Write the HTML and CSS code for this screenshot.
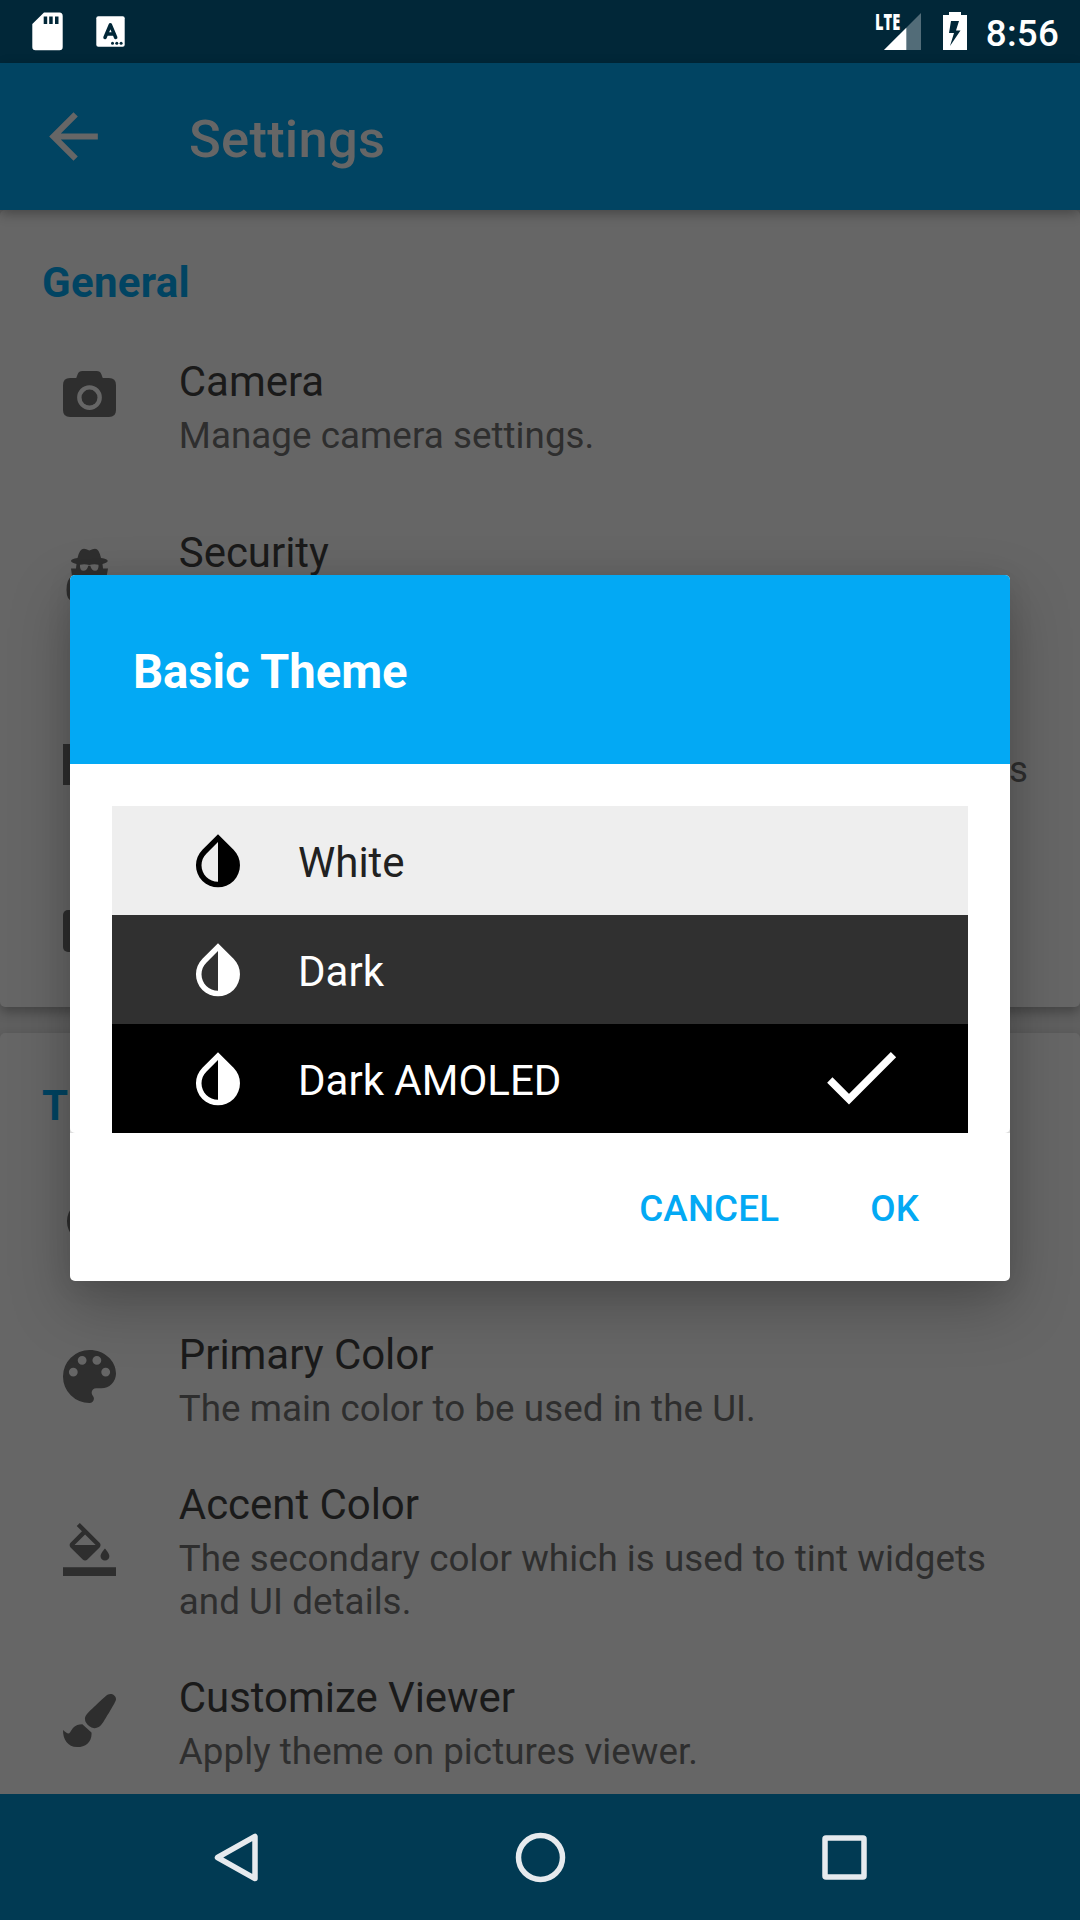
FILE: index.html
```html
<!DOCTYPE html>
<html lang="en">
<head>
<meta charset="utf-8">
<title>Settings</title>
<link rel="stylesheet" href="styles.css">
</head>
<body>
<svg class="defs" width="0" height="0">
  <symbol id="drop" viewBox="0 0 24 24"><path d="M17.66 7.93 12 2.27 6.34 7.93c-3.12 3.12-3.12 8.19 0 11.31C7.9 20.8 9.95 21.58 12 21.58c2.05 0 4.1-.78 5.66-2.34 3.12-3.12 3.12-8.19 0-11.31zM12 19.59c-1.6 0-3.11-.62-4.24-1.76C6.62 16.69 6 15.19 6 13.59s.62-3.11 1.76-4.24L12 5.1v14.49z"/></symbol>
</svg>
<header class="status">
  <div class="status-left">
    <svg class="sd" width="31" height="39" viewBox="0 0 31 39"><path fill="#fff" fill-rule="evenodd" d="M12 .5H27.500Q30.700.5 30.700 4V35Q30.700 38.300 27.500 38.300H3.500Q.3 38.300.3 35V12ZM11.700 4.500V12H15.200V4.500ZM17.200 4.500V12H20.700V4.500ZM23 4.500V12H26.500V4.500Z"/></svg>
    <svg class="kbd" width="29" height="31" viewBox="0 0 29 31"><rect x=".3" y=".3" width="28.400" height="30.400" rx="2" fill="#fff"/><path d="M9 21.500 14.400 8.800 19.700 21.500M11 18H18" fill="none" stroke="#012738" stroke-width="3.500" stroke-linecap="round" stroke-linejoin="round"/><g fill="#012738"><circle cx="16.500" cy="27.300" r="1.500"/><circle cx="20.800" cy="27.300" r="1.500"/><circle cx="25.100" cy="27.300" r="1.500"/></g></svg>
  </div>
  <div class="status-right">
    <div class="signal"><span class="lte">LTE</span>
      <svg width="37" height="37" viewBox="0 0 37 37"><path d="M37 0V37H0Z" fill="#fff" opacity=".32"/><path d="M22.300 14.700V37H0Z" fill="#fff"/></svg>
    </div>
    <svg class="battery" width="24" height="38" viewBox="0 0 24 38"><path fill="#fff" fill-rule="evenodd" d="M6 0H18V3H24V38H0V3H6ZM8 9 6 21H11L7 34 17.500 18.500H13L16 9Z"/></svg>
    <span class="clock">8:56</span>
  </div>
</header>
<div class="toolbar">
  <svg width="73" height="73" viewBox="0 0 24 24"><path fill="#666" d="M20 11H7.830l5.590-5.590L12 4l-8 8 8 8 1.410-1.410L7.830 13H20v-2z"/></svg>
  <h1>Settings</h1>
</div>
<main class="screen">
  <section class="card general">
    <h2>General</h2>
    <div class="row camera">
      <svg class="icon" width="53" height="46" viewBox="0 0 1920 1664"><path fill-rule="evenodd" d="M256 256H480L531 120Q575 0 704 0H1216Q1345 0 1389 120L1440 256H1664Q1920 256 1920 512V1408Q1920 1664 1664 1664H256Q0 1664 0 1408V512Q0 256 256 256ZM960 512A448 448 0 1 0 960 1408A448 448 0 1 0 960 512Z"/><circle cx="960" cy="960" r="288"/></svg>
      <div><h3>Camera</h3><p>Manage camera settings.</p></div>
    </div>
    <div class="row security">
      <svg class="icon" width="53" height="53" viewBox="0 0 53 53"><path fill-rule="evenodd" d="M14.500 10Q16.500 .7 21 .7 23 .7 26.300 2.500 30 .7 32 .7 36 .7 38 10 44.700 11 44.700 13 44.700 14.700 39.500 16L40 20.500H45L43.500 29Q49.500 31 49.500 42 49.500 53 43 53H10Q3.500 53 3.500 42 3.500 31 9 28L8 20.500H13L13.500 16Q8 14.700 8 13 8 11 14.500 10ZM17 16.800Q16.500 22.800 20.500 22.800 24 22.800 25.300 17.800H27.300Q28.600 22.800 32 22.800 36 22.800 35.500 16.800 31 15.800 26.300 17 21.500 15.800 17 16.800Z"/></svg>
      <div><h3>Security</h3></div>
    </div>
    <div class="row layout">
      <svg class="icon" width="53" height="41" viewBox="0 0 53 41"><path d="M0 0H53V41H0Z"/></svg>
      <p class="tail">s</p>
    </div>
    <div class="row media">
      <svg class="icon" width="53" height="42" viewBox="0 0 53 42"><rect width="53" height="42" rx="5"/></svg>
    </div>
  </section>
  <section class="card theme">
    <h2>Theme</h2>
    <div class="row basic"><svg class="icon" width="66" height="66"><use href="#drop"/></svg></div>
    <div class="row primary">
      <svg class="icon" width="53" height="53" viewBox="3 3 18 18"><path d="M17.500 12A1.500 1.500 0 0 1 16 10.500 1.500 1.500 0 0 1 17.500 9 1.500 1.500 0 0 1 19 10.500 1.500 1.500 0 0 1 17.500 12M14.500 8A1.500 1.500 0 0 1 13 6.500 1.500 1.500 0 0 1 14.500 5 1.500 1.500 0 0 1 16 6.500 1.500 1.500 0 0 1 14.500 8M9.500 8A1.500 1.500 0 0 1 8 6.500 1.500 1.500 0 0 1 9.500 5 1.500 1.500 0 0 1 11 6.500 1.500 1.500 0 0 1 9.500 8M6.500 12A1.500 1.500 0 0 1 5 10.500 1.500 1.500 0 0 1 6.500 9 1.500 1.500 0 0 1 8 10.500 1.500 1.500 0 0 1 6.500 12M12 3A9 9 0 0 0 3 12 9 9 0 0 0 12 21 1.500 1.500 0 0 0 13.500 19.500C13.500 19.110 13.350 18.760 13.110 18.500 12.880 18.230 12.730 17.880 12.730 17.500A1.500 1.500 0 0 1 14.230 16H16A5 5 0 0 0 21 11C21 6.580 16.970 3 12 3Z"/></svg>
      <div><h3>Primary Color</h3><p>The main color to be used in the UI.</p></div>
    </div>
    <div class="row accent">
      <svg class="icon" width="53" height="53" viewBox="0 0 24 24"><path d="M16.560 8.940 7.620 0 6.210 1.410l2.380 2.380-5.150 5.150c-.59.59-.59 1.540 0 2.120l5.500 5.500c.29.29.68.44 1.060.44s.77-.15 1.060-.44l5.500-5.500c.59-.58.59-1.530 0-2.120zM5.210 10 10 5.210 14.790 10H5.210zM19 11.500s-2 2.170-2 3.500c0 1.100.9 2 2 2s2-.9 2-2c0-1.330-2-3.500-2-3.500zM0 20h24v4H0v-4z"/></svg>
      <div><h3>Accent Color</h3><p>The secondary color which is used to tint widgets<br>and UI details.</p></div>
    </div>
    <div class="row viewer">
      <svg class="icon" width="53" height="53" viewBox="0 0 512 512"><path d="M457 0c-15 0-29 7-40 16C213 199 213 209 213 244c0 9 2 18 6 26 17 32 43 53 84 60 44 0 67-28 90-64C412 230 512 78 512 50 512 20 485 0 457 0zM187 293c-78 1-97 47-118 77-15 22-32 10-69-22 0 92 44 164 137 164 79 0 139-46 139-129 0-4-1-8-1-12z"/></svg>
      <div><h3>Customize Viewer</h3><p>Apply theme on pictures viewer.</p></div>
    </div>
  </section>
</main>
<nav class="navbar">
  <svg width="63" height="63" viewBox="0 0 63 63"><path d="M50 10.500V52.500L12.500 31.500Z"/></svg>
  <svg width="63" height="63" viewBox="0 0 63 63"><circle cx="31.500" cy="31.500" r="22"/></svg>
  <svg width="63" height="63" viewBox="0 0 63 63"><rect x="12" y="12" width="39" height="39" rx="1"/></svg>
</nav>
<div class="dialog">
  <div class="dialog-head">Basic Theme</div>
  <div class="dialog-body">
    <div class="options">
      <div class="option white"><svg width="66" height="66"><use href="#drop"/></svg><span>White</span></div>
      <div class="option dark"><svg width="66" height="66"><use href="#drop"/></svg><span>Dark</span></div>
      <div class="option amoled"><svg width="66" height="66"><use href="#drop"/></svg><span>Dark AMOLED</span>
        <svg class="check" width="70" height="53" viewBox="0 0 70 53"><path d="M2.800 28 22 47.200 66.500 2.700" fill="none" stroke="#fff" stroke-width="7.500"/></svg></div>
    </div>
  </div>
  <div class="actions"><span>CANCEL</span><span>OK</span></div>
</div>
</body>
</html>
```
FILE: styles.css
```css
* { box-sizing: border-box; margin: 0; padding: 0; }
body { width: 1080px; height: 1920px; overflow: hidden; display: flex; flex-direction: column; position: relative; background: #5f5f5f; font-family: Roboto, sans-serif; color: #1a1a1a; }
svg { display: block; flex: none; }
.defs { position: absolute; }
h1, h2, h3, p { font-weight: 400; }

.status { height: 63px; flex: none; background: #012738; display: flex; justify-content: space-between; padding: 12px 21px 0 32px; color: #fff; }
.status-left, .status-right { display: flex; align-items: flex-start; }
.status-left { gap: 33px; }
.kbd { margin-top: 4px; }
.signal { display: flex; margin-right: 22px; padding-top: 1px; }
.lte { font: 800 22.500px/18px "Open Sans", sans-serif; transform: scaleX(.65); transform-origin: 0 0; width: 25px; margin-right: -16px; white-space: nowrap; }
.battery { margin-right: 19px; }
.clock { font-size: 36.750px; font-weight: 500; line-height: 43px; letter-spacing: .2px; }

.toolbar { height: 147px; flex: none; background: #014462; display: flex; align-items: center; padding-left: 37px; gap: 79px; position: relative; z-index: 1; box-shadow: 0 4px 11px rgba(0,0,0,.3); color: #666; }
.toolbar svg { margin-bottom: 1px; }
.toolbar h1 { font-size: 52.500px; font-weight: 500; line-height: 62px; margin-top: 4px; letter-spacing: .25px; }

.screen { flex: 1; min-height: 0; display: flex; flex-direction: column; gap: 26px; overflow: hidden; }
.card { background: #666; border-radius: 5px; flex: none; box-shadow: 0 5px 11px rgba(0,0,0,.28); }
.general { height: 797px; padding-top: 48px; }
.theme { height: 900px; padding-top: 48px; }
.card h2 { font-size: 42px; font-weight: 700; line-height: 49px; color: #014462; padding-left: 42px; letter-spacing: .3px; }
.row { display: flex; padding-left: 63px; }
.row > div { flex: 1; }
.row h3 { font-size: 42px; line-height: 49px; letter-spacing: -.05px; }
.row p { font-size: 36.750px; line-height: 43px; color: #2e2e2e; margin-top: 8px; letter-spacing: .05px; }
.icon { fill: #2e2e2e; margin-right: 62.800px; }
.camera { height: 171px; margin-top: 50px; }
.camera .icon { margin-top: 14px; }
.security { height: 205px; }
.security .icon { margin-top: 20px; }
.layout { height: 176px; justify-content: space-between; padding-right: 52px; }
.layout .icon { margin-top: 11px; }
.layout .tail { margin-top: 15px; }
.media .icon { margin-top: 1px; }
.basic { height: 152px; margin-top: 48px; padding-left: 56px; }
.basic .icon { margin-top: 6px; }
.primary { height: 150px; }
.primary .icon { margin-top: 20px; }
.accent { height: 193px; }
.accent .icon { margin-top: 43px; }
.viewer .icon { margin-top: 21px; }

.navbar { height: 126px; flex: none; background: #013a53; display: flex; justify-content: center; align-items: center; gap: 241px; position: relative; }
.navbar svg { fill: none; stroke: #e6eaee; stroke-width: 5.500px; stroke-linejoin: round; }

.dialog { position: absolute; left: 70px; top: 575px; width: 940px; height: 706px; border-radius: 5px; background: #fff; overflow: hidden; box-shadow: 0 24px 60px rgba(0,0,0,.25), 0 4px 26px rgba(0,0,0,.08); }
.dialog-head { height: 189px; background: #03a9f4; color: #fff; font-size: 47.250px; font-weight: 700; line-height: 55px; padding: 70px 63px 0; letter-spacing: -.05px; }
.dialog-body { background: #ddd; }
.options { padding: 42px 42px 0; background: #fff; border-radius: 0 0 5px 5px; }
.option { height: 109px; display: flex; align-items: center; padding-left: 73px; font-size: 42px; }
.option span { margin-left: 47px; margin-top: 3px; }
.white { background: #eee; color: #212121; }
.dark { background: #303030; color: #fff; fill: #fff; }
.amoled { background: #000; color: #fff; fill: #fff; }
.white svg { fill: #000; }
.check { margin: 0 71px 1px auto; }
.actions { display: flex; justify-content: flex-end; gap: 91px; padding: 54px 91px 0 0; font-size: 36.750px; font-weight: 500; line-height: 43px; color: #03a9f4; letter-spacing: .15px; }
```
